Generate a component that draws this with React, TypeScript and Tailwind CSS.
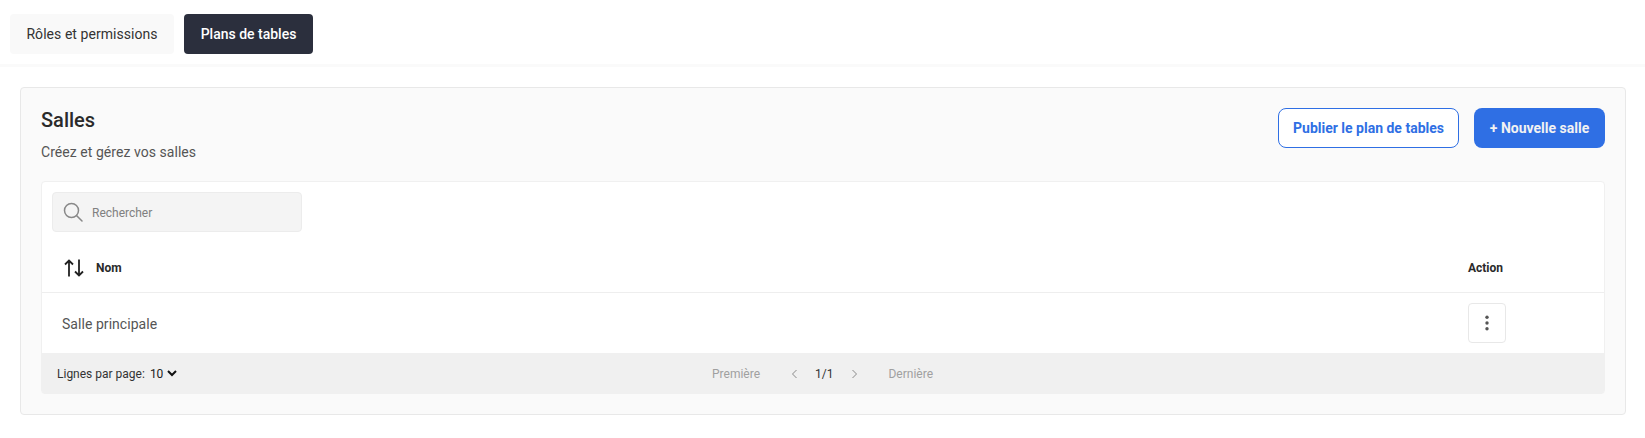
import React from "react";

export default function App() {
  return (
    <div className="h-[438px] bg-white font-['Roboto',sans-serif] overflow-hidden">
      <div className="flex gap-[10px] pl-[10px] pt-[14px] pb-[10px] h-[67px] border-b-[3px] border-[#fafafa]">
        <button className="h-[40px] w-[164px] rounded-[4px] bg-[#f9f9f9] text-[14px] text-[#333] tracking-[0.05px]">Rôles et permissions</button>
        <button className="h-[40px] w-[129px] rounded-[4px] bg-[#2b2f3d] text-[14px] font-medium text-white">Plans de tables</button>
      </div>
      <div className="ml-[20px] mr-[19px] mt-[20px] h-[328px] rounded-[4px] border border-[#e8e8e8] bg-[#fafafa] px-[20px] pt-[20px]">
        <div className="flex h-[73px] items-start justify-between">
          <div>
            <h1 className="text-[20px] leading-[24px] font-medium text-[#2a2a2a]">Salles</h1>
            <p className="mt-[10px] text-[14px] leading-[20px] text-[#555] tracking-[0.05px]">Créez et gérez vos salles</p>
          </div>
          <div className="flex gap-[15px]">
            <button className="h-[40px] w-[181px] rounded-[8px] border border-[#2f6fe4] bg-white text-[14px] font-bold text-[#2f6fe4]">Publier le plan de tables</button>
            <button className="h-[40px] w-[131px] rounded-[8px] bg-[#2f6fe4] text-[14px] font-bold text-[#f2f2f2]">+ Nouvelle salle</button>
          </div>
        </div>
        <div className="h-[213px] rounded-[4px] border border-[#f0f0f0] bg-white">
          <div className="px-[10px] pt-[10px]">
            <div className="flex h-[40px] w-[250px] items-center rounded-[4px] border border-[#ececec] bg-[#f4f4f4] pl-[10px]">
              <svg width="20" height="20" viewBox="0 0 20 20" fill="none" stroke="#888" strokeWidth="1.5" className="mr-[9px]">
                <circle cx="8.5" cy="8.5" r="7" />
                <path d="M13.5 13.5 L19 19" strokeLinecap="round" />
              </svg>
              <span className="pt-[1px] text-[12px] text-[#808080]">Rechercher</span>
            </div>
          </div>
          <div className="flex h-[61px] items-center justify-between border-b border-[#eeeeee] pt-[11px] pl-[22px] pr-[101px]">
            <div className="flex items-center gap-[12px]">
              <svg width="20" height="18" viewBox="0 0 20 18" fill="none" stroke="#222" strokeWidth="1.8" strokeLinejoin="miter">
                <path d="M5 17.5 V1.5 M1 5.5 L5 1.5 L9 5.5" />
                <path d="M15 0.5 V16.5 M11 12.5 L15 16.5 L19 12.5" />
              </svg>
              <span className="text-[12px] font-bold text-[#2a2a2a]">Nom</span>
            </div>
            <span className="text-[12px] font-bold text-[#2a2a2a]">Action</span>
          </div>
          <div className="flex h-[60px] items-center justify-between pl-[20px] pr-[98px]">
            <span className="mt-[3px] text-[14px] text-[#555] tracking-[0.05px]">Salle principale</span>
            <button className="flex h-[40px] w-[38px] items-center justify-center rounded-[4px] border border-[#e8e8e8] bg-white">
              <svg width="4" height="16" viewBox="0 0 4 16" fill="#555">
                <circle cx="2" cy="2.2" r="1.7" />
                <circle cx="2" cy="8" r="1.7" />
                <circle cx="2" cy="13.8" r="1.7" />
              </svg>
            </button>
          </div>
          <div className="relative flex h-[41px] items-center rounded-b-[4px] bg-[#f0f0f0] pl-[15px] text-[12px]">
            <span className="text-[#333]">Lignes par page:</span>
            <span className="ml-[5px] text-[#222]">10</span>
            <svg width="10" height="7" viewBox="0 0 10 7" fill="none" stroke="#111" strokeWidth="2" className="ml-[4px]">
              <path d="M1 1 L5 5 L9 1" />
            </svg>
            <div className="absolute left-[670px] top-0 flex h-full items-center text-[#a0a0a0]">
              <span>Première</span>
              <svg width="7" height="10" viewBox="0 0 7 10" fill="none" stroke="#8a8a8a" strokeWidth="1" className="ml-[31px]">
                <path d="M5.5 1 L1.5 5 L5.5 9" />
              </svg>
              <span className="ml-[17px] text-[#333]">1/1</span>
              <svg width="7" height="10" viewBox="0 0 7 10" fill="none" stroke="#8a8a8a" strokeWidth="1" className="ml-[18px]">
                <path d="M1.5 1 L5.5 5 L1.5 9" />
              </svg>
              <span className="ml-[30px]">Dernière</span>
            </div>
          </div>
        </div>
      </div>
    </div>
  );
}
